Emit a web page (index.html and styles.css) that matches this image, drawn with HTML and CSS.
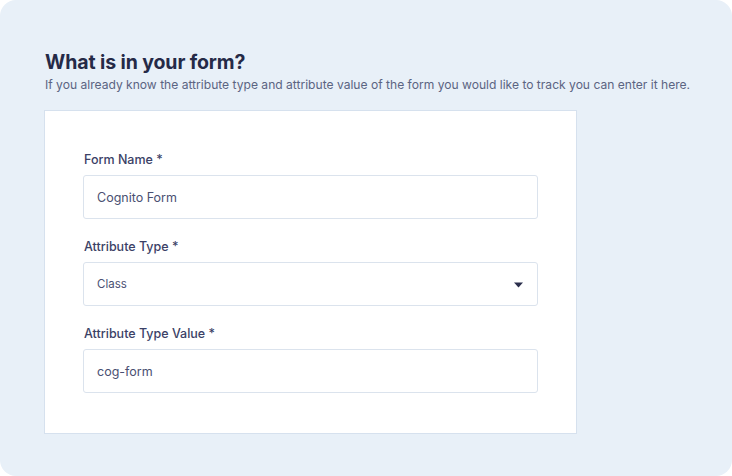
FILE: index.html
```html
<!DOCTYPE html>
<html>
<head>
<meta charset="utf-8">
<link rel="stylesheet" href="styles.css">
</head>
<body>
<div class="panel">
  <h1 class="title">What is in your form?</h1>
  <p class="subtitle">If you already know the attribute type and attribute value of the form you would like to track you can enter it here.</p>
  <div class="card">
    <div class="field">
      <label class="label">Form Name *</label>
      <div class="input">Cognito Form</div>
    </div>
    <div class="field">
      <label class="label">Attribute Type *</label>
      <div class="input select"><span class="small">Class</span>
        <svg class="caret" width="9" height="6" viewBox="0 0 9 6"><path d="M0 0.5H9L4.5 5.5Z" fill="#2b2f4c"/></svg>
      </div>
    </div>
    <div class="field">
      <label class="label">Attribute Type Value *</label>
      <div class="input">cog-form</div>
    </div>
  </div>
</div>
</body>
</html>
```
FILE: styles.css
```css
html, body { margin: 0; padding: 0; background: #ffffff; }
body { font-family: Inter, "Noto Sans", sans-serif; }
.panel {
  width: 732px;
  height: 476px;
  box-sizing: border-box;
  background: #e8f0f8;
  border-radius: 16px;
  padding: 49px 0 0 45px;
}
.title {
  margin: 0;
  font-size: 19.5px;
  line-height: 26px;
  font-weight: 700;
  color: #252a47;
  letter-spacing: -0.1px;
}
.subtitle {
  margin: 1px 0 0 0;
  font-size: 12.08px;
  line-height: 18px;
  color: #5b6482;
}
.card {
  margin: 16px 0 0 -1px;
  width: 533px;
  box-sizing: border-box;
  background: #ffffff;
  border: 1px solid #d6e1ee;
  padding: 40px 38px 40px 38px;
  display: flex;
  flex-direction: column;
  gap: 19px;
}
.field { display: flex; flex-direction: column; }
.label {
  font-size: 12.5px;
  line-height: 18px;
  font-weight: 500;
  color: #3b4166;
  margin: 0 0 6px 1px;
}
.input {
  height: 44px;
  box-sizing: border-box;
  border: 1px solid #dbe3ed;
  border-radius: 3px;
  padding: 0 13px;
  display: flex;
  align-items: center;
  font-size: 12.5px;
  color: #4a5072;
}
.select { justify-content: space-between; padding-right: 14px; }
.small { font-size: 11.5px; }
.caret { display: block; margin-top: 1px; }
```
